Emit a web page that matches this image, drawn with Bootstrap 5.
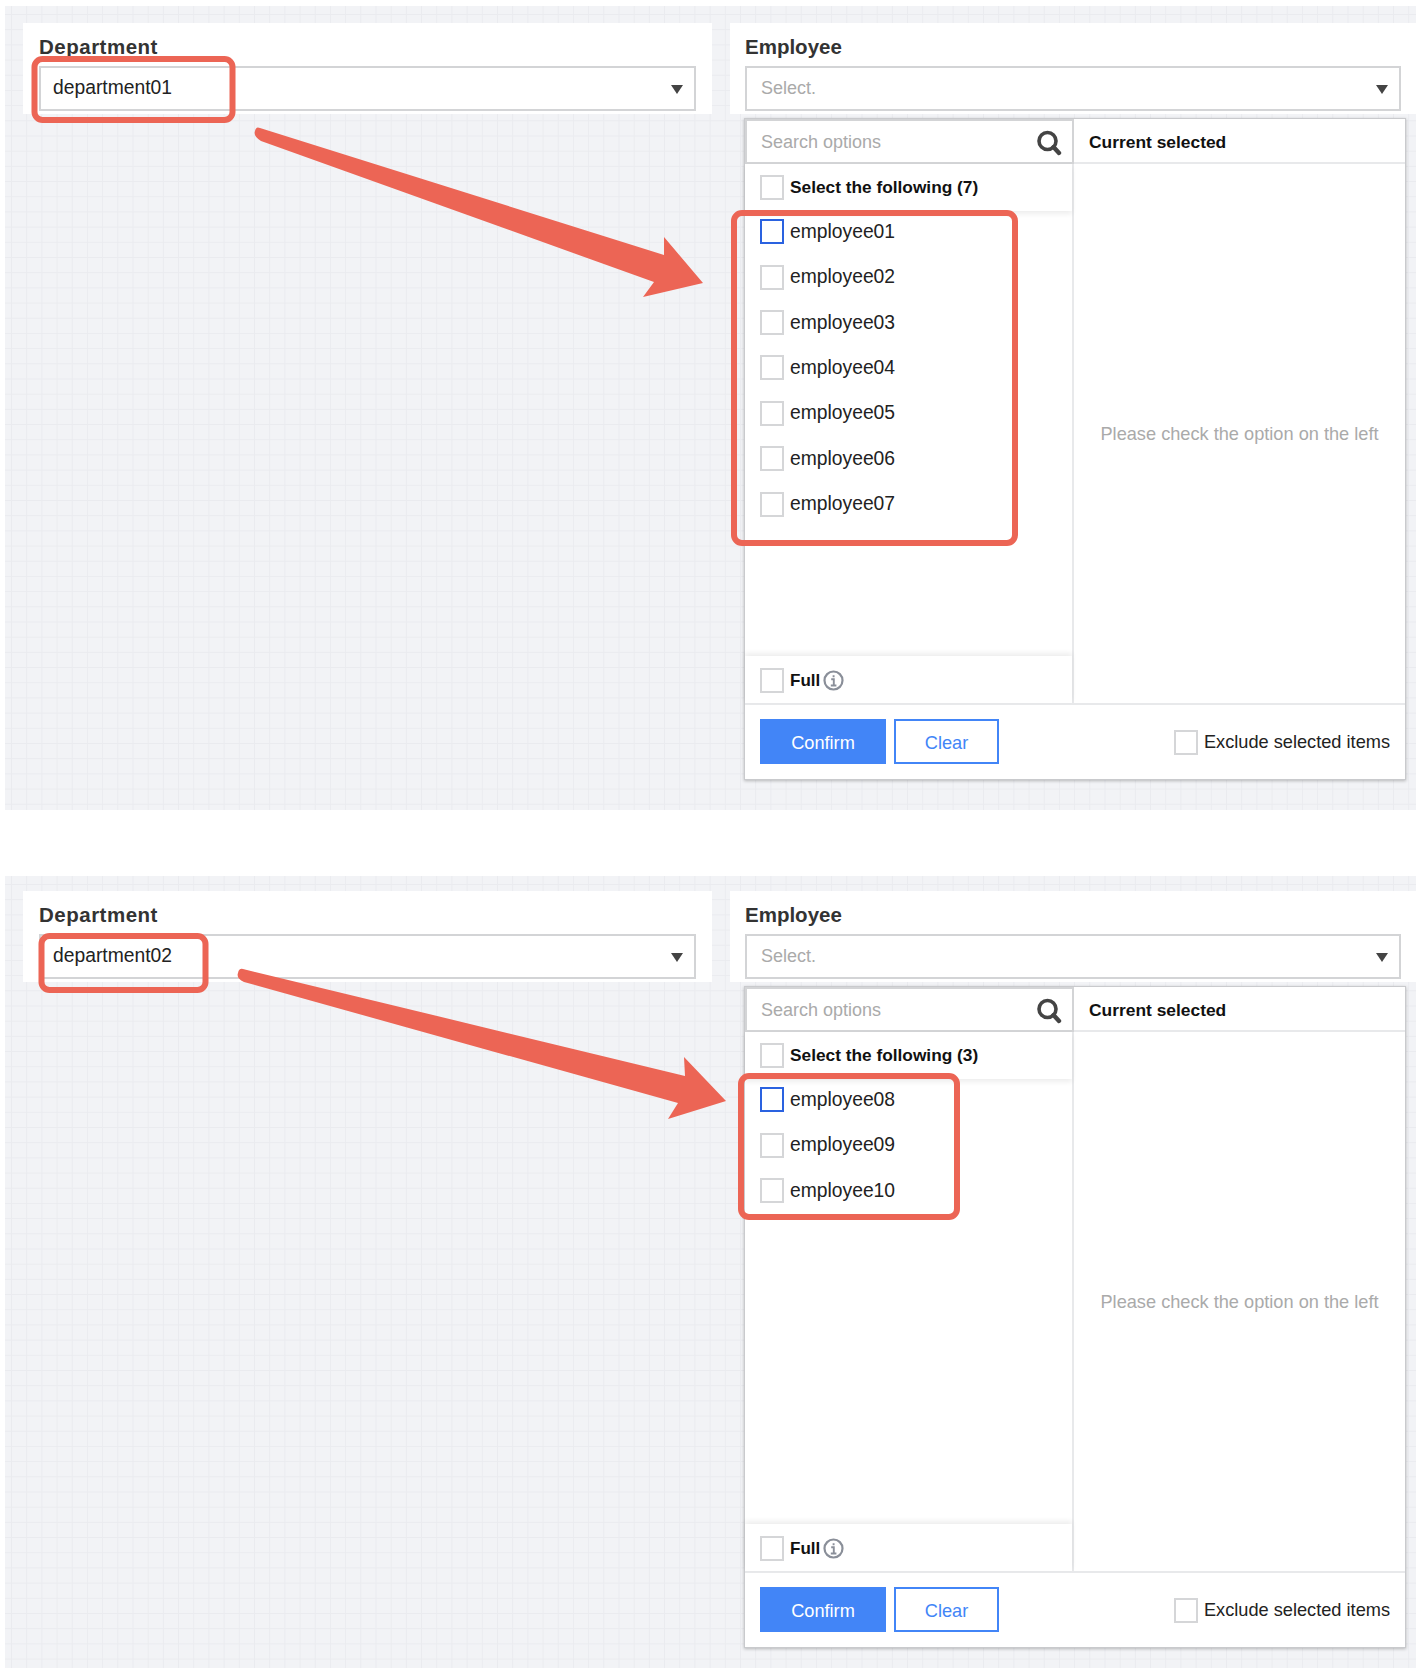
<!DOCTYPE html>
<html lang="en">
<head>
<meta charset="utf-8">
<title>Department and employee selection</title>
<link href="https://cdn.jsdelivr.net/npm/bootstrap@5.3.0/dist/css/bootstrap.min.css" rel="stylesheet">
<style>
html,body{margin:0;height:1668px;overflow:hidden;background:#fff}
body{font-family:"Liberation Sans",Arial,sans-serif;position:relative;color:#222;padding:6px 0 0 5px}
.stage{position:relative;height:804px;padding:17px 15px 0 18px;
 background-color:#f2f3f6;
 background-image:linear-gradient(#eaebef 1px,transparent 1px),linear-gradient(90deg,#eaebef 1px,transparent 1px);
 background-size:15.2px 15.2px;background-position:6px 8px;overflow:hidden}
.stage-two{height:792px;margin-top:66px;padding-top:15px}
.top-cards{gap:18px;margin-right:-15px}
.field-card{background:#fff;height:91px;width:689px;padding:10px 16px 0 16px;flex:none}
.field-card.right-card{width:686px;padding:10px 15px 0 15px}
.field-label{font-size:20.5px;font-weight:700;color:#333;line-height:28px;height:33px}
.dept-label{letter-spacing:.5px}
.pick{height:45px;border:2px solid #d3d4d6;background:#fff;padding:0 14px 0 12px;font-size:19.3px;line-height:40px;color:#222}
.pick.empty{color:#aaa;padding-left:14px;font-size:18px}
.caret-tri{width:0;height:0;border-left:6.5px solid transparent;border-right:6.5px solid transparent;border-top:9px solid #444;margin-top:17px;margin-right:-3px}
.popup{position:relative;width:662px;height:662px;margin:4px 0 0 721px;background:#fff;border:1px solid #c9cacd;box-shadow:0 1px 3px rgba(0,0,0,.25)}
.popup-body{height:584px}
.left-col{width:329px;border-right:2px solid #e8e9eb;position:relative}
.search-bar{height:45px;border:2px solid #d3d4d6;padding:2px 10px 0 14px;color:#aaa;font-size:18px;margin-right:-2px}
.search-bar svg{flex:none}
.chk{width:24px;height:25px;border:2px solid #d5d6d8;background:#fff;flex:none;margin:0;border-radius:0}
.chk.blue{border-color:#2a62e0}
.opt{height:45.4px;padding-left:15px;font-size:19.3px;color:#222;gap:6px}
.opt span:last-child{padding-top:1px}
.head-row{height:47px;padding-left:15px;font-size:17.3px;font-weight:700;color:#111;gap:6px;box-shadow:0 3px 5px rgba(0,0,0,.07);position:relative}
.opts-list{height:445px;display:flow-root}
.opts-shift{margin-top:-2px}
.full-row{height:47px;padding:2px 0 0 15px;font-size:17px;font-weight:700;color:#111;gap:6px;box-shadow:0 -3px 5px rgba(0,0,0,.07);position:relative}
.info-mark{margin-left:3px}
.right-col{flex:1}
.cur-head{height:45px;border-bottom:2px solid #e8e9eb;padding-left:15px;font-size:17.4px;font-weight:700;color:#111;line-height:46px}
.cur-empty{color:#aaa;font-size:18.2px;padding-top:2px}
.foot-bar{height:77px;border-top:2px solid #e8e9eb;padding:14px 15px 0 15px}
.btn.go,.btn.wipe{height:45px;border-radius:0;font-size:18.2px;padding:2px 0 0;line-height:40px}
.btn.go{width:126px;background:#4285f7;border:2px solid #4285f7;color:#fff;margin-right:8px}
.btn.wipe{width:105px;background:#fff;border:2px solid #4285f7;color:#4285f7}
.excl{font-size:18.2px;color:#222;gap:6px;height:45px;padding-top:2px}
.marks{position:absolute;left:0;top:0;width:1416px;height:1668px;pointer-events:none}
</style>
</head>
<body>
<div class="stage">
  <div class="d-flex top-cards">
    <div class="field-card"><div class="field-label dept-label">Department</div>
      <div class="pick d-flex justify-content-between"><span>department01</span><span class="caret-tri"></span></div></div>
    <div class="field-card right-card"><div class="field-label">Employee</div>
      <div class="pick empty d-flex justify-content-between"><span>Select.</span><span class="caret-tri"></span></div></div>
  </div>
  <div class="popup">
    <div class="popup-body d-flex">
      <div class="left-col">
        <div class="search-bar d-flex align-items-center justify-content-between"><span>Search options</span>
          <svg width="26" height="26" viewBox="0 0 26 26" fill="none" stroke="#444" stroke-width="3.6"><circle cx="11.5" cy="11" r="8.5"/><path d="M17.5 17 23 23" stroke-width="4.4" stroke-linecap="round"/></svg></div>
        <div class="head-row d-flex align-items-center"><span class="chk"></span><span>Select the following (7)</span></div>
        <div class="opts-list"><div class="opts-shift">
          <div class="opt d-flex align-items-center"><span class="chk blue"></span><span>employee01</span></div>
          <div class="opt d-flex align-items-center"><span class="chk"></span><span>employee02</span></div>
          <div class="opt d-flex align-items-center"><span class="chk"></span><span>employee03</span></div>
          <div class="opt d-flex align-items-center"><span class="chk"></span><span>employee04</span></div>
          <div class="opt d-flex align-items-center"><span class="chk"></span><span>employee05</span></div>
          <div class="opt d-flex align-items-center"><span class="chk"></span><span>employee06</span></div>
          <div class="opt d-flex align-items-center"><span class="chk"></span><span>employee07</span></div>
        </div></div>
        <div class="full-row d-flex align-items-center"><span class="chk"></span><span class="d-flex align-items-center">Full<svg class="info-mark" width="21" height="21" viewBox="0 0 21 21" fill="none" stroke="#8a8f99" stroke-width="2.2"><circle cx="10.5" cy="10.5" r="9"/><path d="M8.2 9.3h2.6v6M7.8 15.5h5.6M10.6 5.2v2" stroke-width="1.9"/></svg></span></div>
      </div>
      <div class="right-col d-flex flex-column">
        <div class="cur-head">Current selected</div>
        <div class="cur-empty flex-grow-1 d-flex align-items-center justify-content-center">Please check the option on the left</div>
      </div>
    </div>
    <div class="foot-bar d-flex align-items-start">
      <button type="button" class="btn go">Confirm</button>
      <button type="button" class="btn wipe">Clear</button>
      <div class="excl d-flex align-items-center ms-auto"><span class="chk"></span><span>Exclude selected items</span></div>
    </div>
  </div>
</div>
<div class="stage stage-two">
  <div class="d-flex top-cards">
    <div class="field-card"><div class="field-label dept-label">Department</div>
      <div class="pick d-flex justify-content-between"><span>department02</span><span class="caret-tri"></span></div></div>
    <div class="field-card right-card"><div class="field-label">Employee</div>
      <div class="pick empty d-flex justify-content-between"><span>Select.</span><span class="caret-tri"></span></div></div>
  </div>
  <div class="popup">
    <div class="popup-body d-flex">
      <div class="left-col">
        <div class="search-bar d-flex align-items-center justify-content-between"><span>Search options</span>
          <svg width="26" height="26" viewBox="0 0 26 26" fill="none" stroke="#444" stroke-width="3.6"><circle cx="11.5" cy="11" r="8.5"/><path d="M17.5 17 23 23" stroke-width="4.4" stroke-linecap="round"/></svg></div>
        <div class="head-row d-flex align-items-center"><span class="chk"></span><span>Select the following (3)</span></div>
        <div class="opts-list"><div class="opts-shift">
          <div class="opt d-flex align-items-center"><span class="chk blue"></span><span>employee08</span></div>
          <div class="opt d-flex align-items-center"><span class="chk"></span><span>employee09</span></div>
          <div class="opt d-flex align-items-center"><span class="chk"></span><span>employee10</span></div>
        </div></div>
        <div class="full-row d-flex align-items-center"><span class="chk"></span><span class="d-flex align-items-center">Full<svg class="info-mark" width="21" height="21" viewBox="0 0 21 21" fill="none" stroke="#8a8f99" stroke-width="2.2"><circle cx="10.5" cy="10.5" r="9"/><path d="M8.2 9.3h2.6v6M7.8 15.5h5.6M10.6 5.2v2" stroke-width="1.9"/></svg></span></div>
      </div>
      <div class="right-col d-flex flex-column">
        <div class="cur-head">Current selected</div>
        <div class="cur-empty flex-grow-1 d-flex align-items-center justify-content-center">Please check the option on the left</div>
      </div>
    </div>
    <div class="foot-bar d-flex align-items-start">
      <button type="button" class="btn go">Confirm</button>
      <button type="button" class="btn wipe">Clear</button>
      <div class="excl d-flex align-items-center ms-auto"><span class="chk"></span><span>Exclude selected items</span></div>
    </div>
  </div>
</div>
<svg class="marks" viewBox="0 0 1416 1668" fill="none">
  <g stroke="#ec6555" stroke-width="6">
    <rect x="34.5" y="59" width="198" height="61" rx="8"/>
    <rect x="734" y="213" width="281" height="330" rx="8"/>
    <rect x="41.5" y="936" width="164" height="54" rx="8"/>
    <rect x="741" y="1076" width="216" height="141" rx="8"/>
  </g>
  <g fill="#ec6555">
    <path d="M260 128 664 255 664 237 703 283 643 297 654 282 261 141Q253 136 255 131 256 126 260 128Z"/>
    <path d="M243 969 685 1076 684 1057 726 1101 668 1119 678 1103 244 982Q236 978 238 973 239 968 243 969Z"/>
  </g>
</svg>
<script src="https://cdn.jsdelivr.net/npm/bootstrap@5.3.0/dist/js/bootstrap.bundle.min.js"></script>
</body>
</html>
